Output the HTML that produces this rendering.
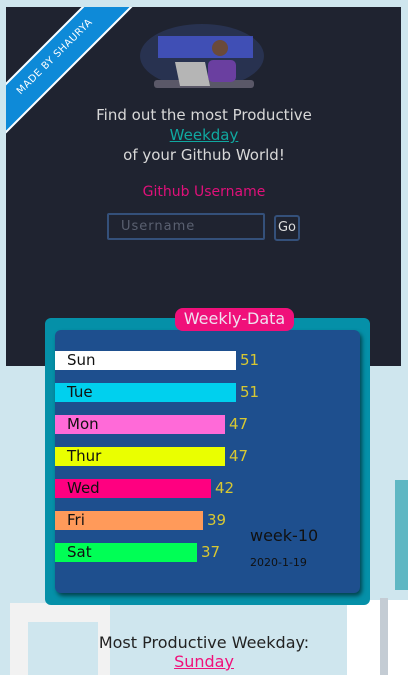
<!DOCTYPE html>
<html><head><meta charset="utf-8"><style>
*{margin:0;padding:0;box-sizing:border-box}
body{width:408px;height:675px;background:#cfe6ee;position:relative;overflow:hidden;font-family:"DejaVu Sans","Liberation Sans",sans-serif}
.abs{position:absolute}
.dark{left:6px;top:7px;width:395px;height:359px;background:#1f2330}
.rib{left:-50px;top:33px;width:200px;height:36px;background:#0e8ad8;transform:rotate(-45deg);color:#fff;font-size:10px;text-align:center;line-height:30px;border-top:2px solid #fff;border-bottom:2px solid #fff;letter-spacing:.5px}
.t{color:#d8d8d8;font-size:15px;text-align:center;width:408px;left:0}
.bar{left:55px;height:19px;font-size:15px;line-height:19px;padding-left:12px;color:#111}
.num{color:#d8c832;font-size:15px;line-height:19px}
</style></head><body>
<div class="abs" style="left:395px;top:480px;width:13px;height:110px;background:#5fb7c3"></div>
<div class="abs" style="left:10px;top:603px;width:100px;height:72px;background:#f2f2f2"></div>
<div class="abs" style="left:28px;top:622px;width:70px;height:53px;background:#cfe6ee"></div>
<div class="abs" style="left:347px;top:600px;width:61px;height:75px;background:#fff"></div>
<div class="abs" style="left:380px;top:598px;width:8px;height:77px;background:#c4ccd4"></div>
<div class="abs dark"></div>
<div class="abs" style="left:6px;top:7px;width:130px;height:130px;overflow:hidden"><div class="abs rib">MADE BY SHAURYA</div></div>
<svg class="abs" style="left:140px;top:24px" width="130" height="70">
<ellipse cx="62" cy="32" rx="62" ry="32" fill="#283250"/>
<rect x="18" y="12" width="95" height="22" fill="#4a5be0" opacity=".7"/>
<rect x="14" y="56" width="100" height="8" rx="3" fill="#5a5868"/>
<circle cx="80" cy="24" r="8" fill="#6a4a3a"/>
<rect x="68" y="36" width="28" height="22" rx="5" fill="#6a3fa0"/>
<polygon points="35,38 65,38 70,62 40,62" fill="#b5b5b5"/>
</svg>
<div class="abs t" style="top:106px">Find out the most Productive</div>
<div class="abs t" style="top:126px;color:#10a8a0;text-decoration:underline">Weekday</div>
<div class="abs t" style="top:146px">of your Github World!</div>
<div class="abs t" style="top:184px;color:#e0107a;font-size:14px">Github Username</div>
<div class="abs" style="left:107px;top:213px;width:158px;height:27px;border:2px solid #34507a;border-radius:2px;color:#5a6070;font-size:13px;padding:4px 12px;letter-spacing:1px">Username</div>
<div class="abs" style="left:274px;top:215px;width:26px;height:26px;border:2px solid #34507a;border-radius:3px;color:#ddd;font-size:13px;text-align:center;line-height:22px">Go</div>
<div class="abs" style="left:45px;top:318px;width:325px;height:287px;background:#0590a8;border-radius:6px"></div>
<div class="abs" style="left:55px;top:330px;width:305px;height:263px;background:#1e4f8e;border-radius:6px;box-shadow:2px 3px 4px #0008"></div>
<div class="abs" style="left:175px;top:308px;width:119px;height:23px;background:#f0107a;border-radius:8px;color:#f0e0f0;font-size:16px;text-align:center;line-height:22px">Weekly-Data</div>
<div class="abs bar" style="top:351px;width:181px;background:#fff">Sun</div><div class="abs num" style="left:240px;top:351px">51</div>
<div class="abs bar" style="top:383px;width:181px;background:#00d0ee">Tue</div><div class="abs num" style="left:240px;top:383px">51</div>
<div class="abs bar" style="top:415px;width:170px;background:#ff6ad8">Mon</div><div class="abs num" style="left:229px;top:415px">47</div>
<div class="abs bar" style="top:447px;width:170px;background:#eaff00">Thur</div><div class="abs num" style="left:229px;top:447px">47</div>
<div class="abs bar" style="top:479px;width:156px;background:#ff0080">Wed</div><div class="abs num" style="left:215px;top:479px">42</div>
<div class="abs bar" style="top:511px;width:148px;background:#ff9a5a">Fri</div><div class="abs num" style="left:207px;top:511px">39</div>
<div class="abs bar" style="top:543px;width:142px;background:#00ff55">Sat</div><div class="abs num" style="left:201px;top:543px">37</div>
<div class="abs" style="left:250px;top:526px;font-size:16px;color:#111">week-10</div>
<div class="abs" style="left:250px;top:556px;font-size:11px;color:#111">2020-1-19</div>
<div class="abs t" style="top:633px;color:#222;font-size:16px">Most Productive Weekday:</div>
<div class="abs t" style="top:652px;color:#f0107a;font-size:16px;text-decoration:underline">Sunday</div>
</body></html>
